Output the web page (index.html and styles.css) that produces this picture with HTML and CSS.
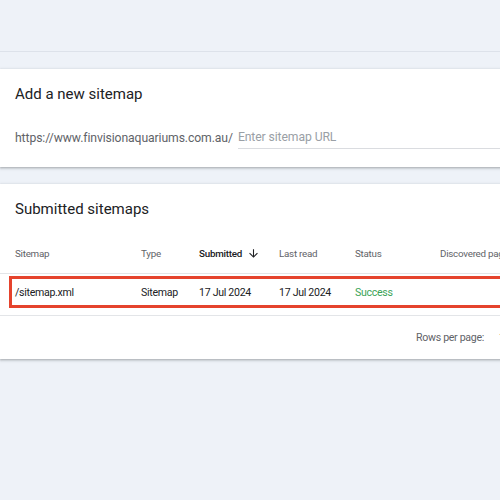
FILE: index.html
```html
<!DOCTYPE html>
<html>
<head>
<meta charset="utf-8">
<link rel="stylesheet" href="styles.css">
</head>
<body>
<div class="topbar"></div>
<section class="card add-card">
  <h2 class="card-title">Add a new sitemap</h2>
  <div class="add-row">
    <span class="prefix">https://www.finvisionaquariums.com.au/</span>
    <div class="input-wrap"><span class="placeholder">Enter sitemap URL</span></div>
  </div>
</section>
<section class="card list-card">
  <h2 class="card-title">Submitted sitemaps</h2>
  <div class="thead grid">
    <span>Sitemap</span>
    <span>Type</span>
    <span class="sorted">Submitted <svg class="arrow" viewBox="0 0 24 24" width="13" height="13"><path d="M20 12l-1.41-1.41L13 16.17V4h-2v12.17l-5.58-5.59L4 12l8 8 8-8z" fill="#202124"/></svg></span>
    <span>Last read</span>
    <span>Status</span>
    <span>Discovered pages</span>
  </div>
  <div class="trow">
    <div class="highlight grid">
      <span>/sitemap.xml</span>
      <span>Sitemap</span>
      <span>17 Jul 2024</span>
      <span>17 Jul 2024</span>
      <span class="success">Success</span>
      <span></span>
    </div>
  </div>
  <div class="footer">
    <span class="rpp">Rows per page:</span>
    <span class="rpp-val">10</span>
  </div>
</section>
</body>
</html>
```

FILE: styles.css
```css
html, body {
  margin: 0;
  padding: 0;
}
body {
  background: #eef2f8;
  font-family: Roboto, "Liberation Sans", Arial, sans-serif;
  color: #202124;
  width: 500px;
  height: 500px;
  overflow: hidden;
}
.topbar {
  height: 51px;
  border-bottom: 1px solid #dde2ea;
  margin-bottom: 17px;
}
.card {
  background: #fff;
  width: 560px;
  box-shadow: 0 1px 2px rgba(60,64,67,.3), 0 1px 3px 1px rgba(60,64,67,.12);
  overflow: hidden;
}
.card-title {
  margin: 0;
  font-weight: 400;
  font-size: 15px;
  line-height: 20px;
  padding: 15px 0 0 15px;
}
.add-card {
  height: 98px;
  margin-bottom: 17px;
}
.add-row {
  display: flex;
  align-items: flex-end;
  margin-top: 22px;
  padding-left: 15px;
}
.prefix {
  font-size: 12.2px;
  letter-spacing: -0.1px;
  color: #5f6368;
  line-height: 18px;
  padding-bottom: 2px;
}
.input-wrap {
  margin-left: 5px;
  flex: 1;
  border-bottom: 1px solid #dadce0;
  padding-bottom: 2px;
}
.placeholder {
  font-size: 12.2px;
  letter-spacing: -0.1px;
  color: #9aa0a6;
  line-height: 18px;
}
.list-card {
  height: 175px;
}
.grid {
  display: grid;
  grid-template-columns: 126px 58px 80px 76px 85px 1fr;
  align-items: center;
}
.thead {
  margin-top: 24px;
  height: 20px;
  padding-bottom: 10px;
  padding-left: 15px;
  font-size: 9.8px;
  letter-spacing: -0.25px;
  color: #5f6368;
  border-bottom: 1px solid #e3e5e8;
}
.thead .sorted {
  color: #202124;
  font-weight: 500;
  display: flex;
  align-items: center;
  gap: 5px;
}
.arrow {
  display: block;
}
.trow {
  height: 42px;
  border-bottom: 1px solid #e3e5e8;
  box-sizing: border-box;
  padding-top: 2px;
}
.highlight {
  margin-left: 9px;
  height: 32px;
  box-sizing: border-box;
  border: 3px solid #e5432d;
  padding-left: 3px;
  font-size: 10.6px;
  letter-spacing: -0.3px;
  color: #202124;
}
.success {
  color: #3aa357;
}
.footer {
  display: flex;
  align-items: center;
  height: 42px;
  padding-left: 416px;
  font-size: 10.6px;
  letter-spacing: -0.3px;
  color: #5f6368;
}
.rpp-val {
  margin-left: 15px;
  color: #202124;
}
```
